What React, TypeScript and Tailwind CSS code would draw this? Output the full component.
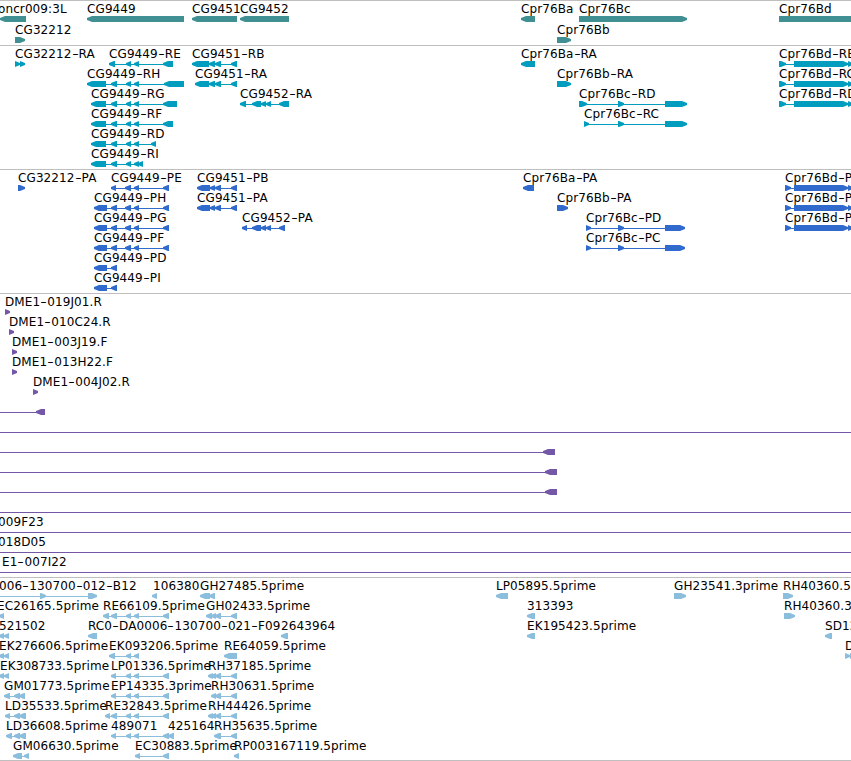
type Exon = [number, number];

type Feature = {
  label: string;
  x: number;
  dir: "left" | "right";
  exons: Exon[];
  // line extents, only where they differ from the exons
  from?: number;
  to?: number;
};

type Track = {
  name: string;
  color: string;
  height: string;
  rowHeight: string;
  rows: Feature[][];
};

const WIDTH = 851;

const left = (label: string, x: number, exons: Exon[], extra: Partial<Feature> = {}): Feature => ({
  label,
  x,
  dir: "left",
  exons,
  ...extra,
});

const right = (label: string, x: number, exons: Exon[], extra: Partial<Feature> = {}): Feature => ({
  label,
  x,
  dir: "right",
  exons,
  ...extra,
});

const span = (label = "", x = 0): Feature => left(label, x, [], { from: 0, to: WIDTH });

// exons shared by several isoforms
const rnaMid: Exon[] = [[111, 117], [126, 131], [134, 139]];
const pepMid: Exon[] = [[111, 117], [125, 131], [134, 139]];
const pep9449: Exon[] = [[94, 107], ...pepMid, [163, 169]];
const pep9451: Exon[] = [[197, 210], [210, 215], [215, 221], [231, 237]];
const est9449: Exon[] = [[126, 131], [134, 139], [163, 169]];
const est9451: Exon[] = [[215, 221], [231, 237]];
const rnaBd: Exon[] = [[779, 786], [794, 848], [848, 853]];
const pepBd: Exon[] = [[785, 791], [794, 848], [848, 853]];

const tracks: Track[] = [
  {
    name: "genes",
    color: "#408f93",
    height: "h-[45px]",
    rowHeight: "h-[21px]",
    rows: [
      [
        left("oncr009:3L", -2, [[0, 26]]),
        left("CG9449", 87, [[87, 184]]),
        left("CG9451", 192, [[192, 237]]),
        left("CG9452", 240, [[240, 289]]),
        left("Cpr76Ba", 521, [[521, 535]]),
        right("Cpr76Bc", 579, [[579, 687]]),
        right("Cpr76Bd", 779, [[779, 860]]),
      ],
      [right("CG32212", 15, [[15, 25]]), right("Cpr76Bb", 557, [[557, 571]])],
    ],
  },
  {
    name: "transcripts",
    color: "#009dbf",
    height: "h-[124px]",
    rowHeight: "h-5",
    rows: [
      [
        right("CG32212-RA", 15, [[15, 20], [20, 25]]),
        left("CG9449-RE", 109, [[109, 115], [126, 131], [134, 139], [163, 173]]),
        left("CG9451-RB", 192, [[192, 209], [209, 215], [215, 221], [231, 237]]),
        left("Cpr76Ba-RA", 521, [[521, 535]]),
        right("Cpr76Bd-RB", 779, rnaBd),
      ],
      [
        left("CG9449-RH", 87, [[87, 106], ...rnaMid, [164, 184]]),
        left("CG9451-RA", 195, [[195, 209], [209, 215], [215, 221], [231, 237]]),
        right("Cpr76Bb-RA", 557, [[557, 571]]),
        right("Cpr76Bd-RC", 779, rnaBd),
      ],
      [
        left("CG9449-RG", 91, [[91, 106], ...rnaMid, [163, 177]]),
        left("CG9452-RA", 240, [[240, 246], [252, 261], [261, 266], [266, 271], [279, 289]]),
        right("Cpr76Bc-RD", 579, [[579, 587], [618, 624], [665, 687]]),
        right("Cpr76Bd-RD", 779, rnaBd),
      ],
      [
        left("CG9449-RF", 91, [[91, 106], ...rnaMid, [163, 173]]),
        right("Cpr76Bc-RC", 584, [[584, 589], [618, 624], [665, 687]]),
      ],
      [left("CG9449-RD", 91, [[91, 106], ...rnaMid, [151, 156]])],
      [left("CG9449-RI", 91, [[91, 106], ...rnaMid, [138, 143]])],
    ],
  },
  {
    name: "polypeptides",
    color: "#306acc",
    height: "h-[124px]",
    rowHeight: "h-5",
    rows: [
      [
        right("CG32212-PA", 18, [[18, 25]]),
        left("CG9449-PE", 111, [[111, 116], [125, 131], [134, 139], [163, 169]]),
        left("CG9451-PB", 197, pep9451),
        left("Cpr76Ba-PA", 523, [[523, 534]]),
        right("Cpr76Bd-P", 785, pepBd),
      ],
      [
        left("CG9449-PH", 94, pep9449),
        left("CG9451-PA", 197, pep9451),
        right("Cpr76Bb-PA", 557, [[557, 568]]),
        right("Cpr76Bd-P", 785, pepBd),
      ],
      [
        left("CG9449-PG", 94, pep9449),
        left("CG9452-PA", 242, [[242, 247], [252, 261], [261, 266], [266, 271], [279, 285]]),
        right("Cpr76Bc-PD", 586, [[586, 591], [618, 624], [665, 685]]),
        right("Cpr76Bd-P", 785, pepBd),
      ],
      [
        left("CG9449-PF", 94, pep9449),
        right("Cpr76Bc-PC", 586, [[586, 591], [618, 624], [665, 685]]),
      ],
      [left("CG9449-PD", 94, [[94, 107], [111, 117]])],
      [left("CG9449-PI", 94, [[94, 107], [111, 117]])],
    ],
  },
  {
    name: "clones",
    color: "#7457a7",
    height: "h-[284px]",
    rowHeight: "h-5",
    rows: [
      [right("DME1-019J01.R", 5, [[5, 10]])],
      [right("DME1-010C24.R", 9, [[9, 14]])],
      [right("DME1-003J19.F", 12, [[12, 17]])],
      [right("DME1-013H22.F", 12, [[12, 17]])],
      [right("DME1-004J02.R", 33, [[33, 38]])],
      [left("", 0, [[36, 45]], { from: 0 })],
      [span()],
      [left("", 0, [[543, 555]], { from: 0 })],
      [left("", 0, [[545, 557]], { from: 0 })],
      [left("", 0, [[545, 557]], { from: 0 })],
      [span()],
      [span("009F23", -2)],
      [span("018D05", -2)],
      [span("E1-007I22", 2)],
    ],
  },
  {
    name: "ests",
    color: "#8bbddd",
    height: "h-[183px]",
    rowHeight: "h-5",
    rows: [
      [
        right("006-130700-012-B12", -1, [[40, 46], [88, 97]], { from: 0 }),
        left("106380", 153, [[152, 157]]),
        left("GH27485.5prime", 200, [[200, 210], [209, 215]]),
        left("LP05895.5prime", 496, [[496, 508]]),
        right("GH23541.3prime", 674, [[674, 686]]),
        right("RH40360.5", 783, [[783, 793]]),
      ],
      [
        left("EC26165.5prime", -3, [[-1, 4]]),
        left("RE66109.5prime", 103, [[103, 109], [111, 117], ...est9449]),
        left("GH02433.5prime", 206, [[206, 212], [211, 216], ...est9451]),
        left("313393", 527, [[527, 535]]),
        right("RH40360.3", 784, [[784, 795]]),
      ],
      [
        left("521502", -1, [[-1, 4], [4, 9]]),
        left("RC0-DA0006-130700-021-F09", 88, [[88, 97]]),
        left("2643964", 281, [[281, 288]]),
        left("EK195423.5prime", 527, [[527, 535]]),
        left("SD12", 825, [[825, 832]]),
      ],
      [
        left("EK276606.5prime", -1, [[-1, 4], [4, 9]]),
        left("EK093206.5prime", 109, [[109, 115], [126, 131], [134, 139]]),
        left("RE64059.5prime", 224, [[224, 237]]),
        right("D", 845, [[845, 850], [850, 855]]),
      ],
      [
        left("EK308733.5prime", 0, [[-1, 4], [4, 9]]),
        left("LP01336.5prime", 111, [[111, 116], ...est9449]),
        left("RH37185.5prime", 208, [[208, 213], [211, 216], ...est9451]),
      ],
      [
        left("GM01773.5prime", 4, [[4, 10], [14, 20], [19, 25]]),
        left("EP14335.3prime", 111, [[111, 116], ...est9449]),
        left("RH30631.5prime", 211, [[211, 216], ...est9451]),
      ],
      [
        left("LD35533.5prime", 5, [[5, 10], [14, 20], [19, 26]]),
        left("RE32843.5prime", 105, [[105, 110], [111, 117], ...est9449]),
        left("RH44426.5prime", 208, [[208, 213], [211, 216], ...est9451]),
      ],
      [
        left("LD36608.5prime", 6, [[6, 12], [14, 20], [19, 26]]),
        left("489071", 111, [[111, 116], ...est9449]),
        left("425164", 168, [[168, 174]]),
        left("RH35635.5prime", 214, [[214, 221], [231, 237]]),
      ],
      [
        left("GM06630.5prime", 13, [[13, 22], [24, 29]]),
        left("EC30883.5prime", 135, [[135, 140], [163, 169]]),
        left("RP003167119.5prime", 234, [[234, 239]]),
      ],
    ],
  },
];

// 6px tall box that narrows to a point in the direction of the strand
function exonPoints([a, b]: Exon, dir: Feature["dir"]) {
  const head = Math.min(5, b - a);
  if (dir === "left") {
    return `${a},15 ${a + head},13 ${b},13 ${b},19 ${a + head},19 ${a},17`;
  }
  return `${a},13 ${b - head},13 ${b},15 ${b},17 ${b - head},19 ${a},19`;
}

function Glyph({ feature }: { feature: Feature }) {
  const { exons, dir } = feature;
  const from = feature.from ?? exons[0][0];
  const to = feature.to ?? exons[exons.length - 1][1];
  return (
    <g>
      <rect x={from} y={16} width={to - from} height={1} />
      {exons.map((exon, i) => (
        <polygon key={i} points={exonPoints(exon, dir)} />
      ))}
    </g>
  );
}

function Label({ feature }: { feature: Feature }) {
  if (!feature.label) return null;
  return (
    <span
      className="absolute -top-px whitespace-pre text-[12px] leading-[14px] tracking-[0.1px]"
      style={{ left: feature.x }}
    >
      {feature.label.split(/(-)/).map((part, i) =>
        part === "-" ? (
          <span key={i} className="inline-block w-[7px] scale-x-150 text-center">
            -
          </span>
        ) : (
          part
        )
      )}
    </span>
  );
}

export default function App() {
  return (
    <main className="h-[761px] w-[851px] overflow-hidden border-b border-[#bfbfbf] bg-white font-['DejaVu_Sans',sans-serif] text-black">
      {tracks.map((track) => (
        <section key={track.name} className={`border-t border-[#bfbfbf] pt-0.5 ${track.height}`}>
          {track.rows.map((row, i) => (
            <div key={i} className={`relative ${track.rowHeight}`}>
              <svg width={WIDTH} height={20} className="block" fill={track.color}>
                {row.map((feature, j) => (
                  <Glyph key={j} feature={feature} />
                ))}
              </svg>
              {row.map((feature, j) => (
                <Label key={j} feature={feature} />
              ))}
            </div>
          ))}
        </section>
      ))}
    </main>
  );
}
